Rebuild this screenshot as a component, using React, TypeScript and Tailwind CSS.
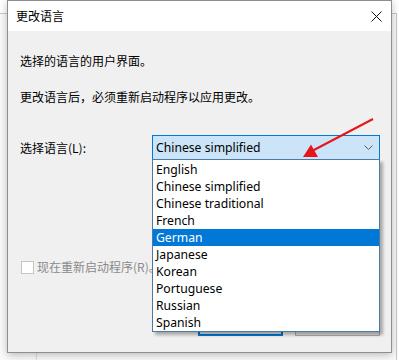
import React from "react";

const languages = [
  "English",
  "Chinese simplified",
  "Chinese traditional",
  "French",
  "German",
  "Japanese",
  "Korean",
  "Portuguese",
  "Russian",
  "Spanish",
];

const cjk = "font-['Microsoft_YaHei','Noto_Sans_CJK_SC',sans-serif]";
const latin = "font-['Noto_Sans','Noto_Sans_CJK_SC',sans-serif]";

export default function App() {
  const selected = "German";

  return (
    <div className="relative h-[360px] w-[399px] overflow-hidden bg-white">
      {/* parent window behind the dialog */}
      <div className="absolute left-[-2px] top-[13px] h-[400px] w-[399px] border-r border-t border-[#c8c8c8] bg-[#fafafa]">
        <div className="ml-[38px] h-full w-px bg-[#dcdcdc]" />
      </div>

      {/* dialog */}
      <div
        className={`absolute left-[7px] top-0 flex h-[353px] w-[385px] flex-col border border-[#8e8e8e] bg-[#f0f0f0] shadow-[0_2px_8px_rgba(0,0,0,0.25)] ${cjk}`}
      >
        <div className="flex h-[30px] items-center justify-between bg-white pl-2 pr-[9px]">
          <span className="text-[12px] text-black">更改语言</span>
          <svg width="11" height="11" viewBox="0 0 11 11" className="text-[#111]">
            <path d="M0.5 0.5 L10.5 10.5 M10.5 0.5 L0.5 10.5" stroke="currentColor" strokeWidth="1" fill="none" />
          </svg>
        </div>

        <div className="flex flex-1 flex-col pl-3 pr-[11px]">
          <p className="mt-[22px] text-[12px] leading-4 text-black">选择的语言的用户界面。</p>
          <p className="mt-[20px] text-[12px] leading-4 text-black">更改语言后，必须重新启动程序以应用更改。</p>

          <div className="mt-[30px] flex items-center justify-between">
            <span className="text-[12px] leading-4 text-black">选择语言(L):</span>
            <div className="relative">
              <div className="flex h-[25px] w-[228px] items-center justify-between border border-[#0078d7] bg-[#cce4f7] pl-[3px] pr-[6px]">
                <span className={`text-[12.2px] leading-4 text-black ${latin}`}>Chinese simplified</span>
                <svg width="9" height="5" viewBox="0 0 9 5">
                  <path d="M0.5 0.5 L4.5 4.5 L8.5 0.5" stroke="#5a5a5a" strokeWidth="1" fill="none" />
                </svg>
              </div>
              <ul
                className={`absolute left-0 top-[24px] z-10 w-[228px] border border-[#4b7aa5] bg-white pt-px shadow-[3px_3px_3px_rgba(0,0,0,0.3)] ${latin}`}
              >
                {languages.map((lang) => (
                  <li
                    key={lang}
                    className={`flex h-[17px] items-center pl-[3px] text-[12.2px] leading-4 ${
                      lang === selected ? "bg-[#0078d7] text-white" : "text-black"
                    }`}
                  >
                    {lang}
                  </li>
                ))}
              </ul>
            </div>
          </div>

          <label className="mt-[99px] flex items-center gap-[3px] pl-[1px]">
            <span className="h-[13px] w-[13px] border border-[#c6c6c6] bg-white" />
            <span className="text-[12px] leading-4 text-[#8a8a8a]">现在重新启动程序(R)。</span>
          </label>

          <div className="mt-[38px] flex justify-end gap-[12px]">
            <div className="h-[23px] w-[85px] border-2 border-[#0078d7] bg-[#e1e1e1]" />
            <div className="h-[23px] w-[85px] border border-[#adadad] bg-[#e1e1e1]" />
          </div>
        </div>
      </div>

      {/* red annotation arrow */}
      <svg className="absolute left-0 top-0 z-20" width="399" height="360" viewBox="0 0 399 360">
        <line x1="373" y1="119" x2="312" y2="151" stroke="#e8141b" strokeWidth="2" />
        <polygon points="303,157 311,144.5 318,157" fill="#e8141b" />
      </svg>
    </div>
  );
}
